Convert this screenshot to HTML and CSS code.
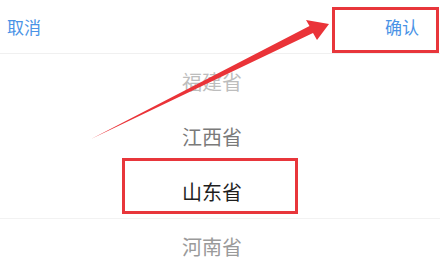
FILE: index.html
```html
<!DOCTYPE html>
<html lang="zh-CN">
<head>
    <meta charset="UTF-8">
    <meta name="viewport" content="width=device-width, initial-scale=1.0">
    <title>选择省份</title>
    <link rel="stylesheet" href="styles.css">
</head>
<body>
    <div class="picker">
        <div class="picker-header">
            <span class="picker-btn">取消</span>
            <span class="picker-btn">确认</span>
        </div>
        <div class="picker-list">
            <div class="picker-item far">福建省</div>
            <div class="picker-item near">江西省</div>
            <div class="picker-item selected">山东省</div>
            <div class="picker-item near2">河南省</div>
        </div>
    </div>

    <!-- annotation overlay -->
    <div class="mark mark-confirm"></div>
    <div class="mark mark-selected"></div>
    <svg class="arrow" width="440" height="278" viewBox="0 0 440 278">
        <polygon points="91,139 309.5,26 306,20 329,24 317,40 313,33" fill="#ea3338"/>
    </svg>
</body>
</html>
```

FILE: styles.css
```css
:root {
    --blue: #4a93e6;
    --mark: #e8363b;
}

body {
    margin: 0;
    background: #fff;
    font-family: "Noto Sans CJK SC", "Noto Sans", sans-serif;
    width: 440px;
    height: 278px;
    overflow: hidden;
}

.picker-header {
    height: 53px;
    display: flex;
    justify-content: space-between;
    align-items: center;
    padding: 0 21px 0 7px;
    border-bottom: 1px solid #f0f0f0;
}

.picker-btn {
    color: var(--blue);
    font-size: 17px;
    line-height: 1;
}

.picker-item {
    height: 55px;
    box-sizing: border-box;
    padding-right: 16px;
    display: flex;
    align-items: center;
    justify-content: center;
    font-size: 20px;
    color: #7a7a7a;
}

.picker-item.far {
    color: #bdbdbd;
}

.picker-item.near2 {
    color: #9a9a9a;
}

.picker-item.selected {
    color: #1e1e1e;
    border-bottom: 1px solid #f2f2f2;
}

.mark {
    position: absolute;
    border: 3px solid var(--mark);
    box-sizing: border-box;
}

.mark-confirm {
    left: 332px;
    top: 7px;
    width: 107px;
    height: 46px;
}

.mark-selected {
    left: 122px;
    top: 158px;
    width: 176px;
    height: 56px;
}

.arrow {
    position: absolute;
    left: 0;
    top: 0;
}
```
